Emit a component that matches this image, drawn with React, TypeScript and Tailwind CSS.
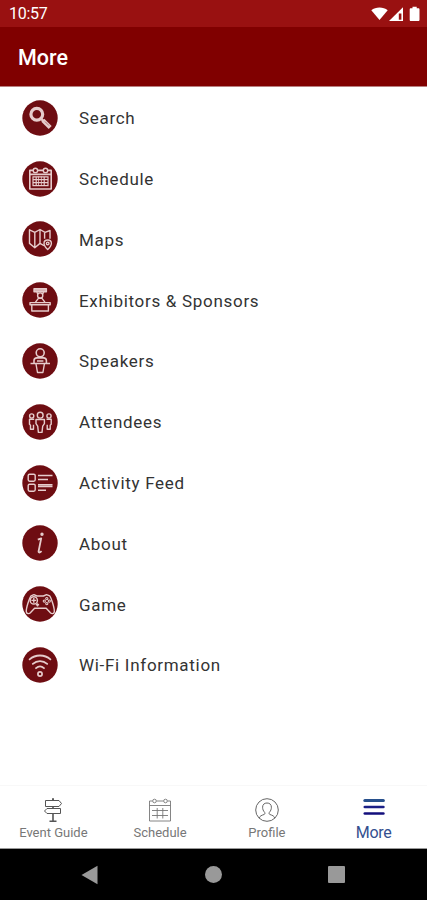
import React from 'react';

interface MenuItem {
  label: string;
  icon: React.ReactNode;
}

// All menu glyphs share a 36x36 box, drawn over a round badge
const Badge: React.FC<{ children: React.ReactNode }> = ({ children }) => (
  <svg viewBox="0 0 36 36" className="h-9 w-9 shrink-0" fill="none" stroke="#e6cccc" strokeWidth="1.4" strokeLinejoin="round">
    <circle cx="18" cy="18" r="17.7" fill="#6e0d12" stroke="none" />
    {children}
  </svg>
);

const menuItems: MenuItem[] = [
  {
    label: 'Search',
    icon: (
      <>
        <circle cx="14.8" cy="14.2" r="5.9" strokeWidth="3.2" />
        <path d="M18.8 18.4l3 3" strokeWidth="2.6" />
        <path d="M20.8 20.2l7.400 7.200" strokeWidth="4.2" />
        <path d="M23 21.6l4 4" stroke="#a65c5f" strokeWidth="0.8" />
      </>
    ),
  },
  {
    label: 'Schedule',
    icon: (
      <>
        <path d="M11 9.4H7.800v18.600h21.400v-18.600H26M16 9.4h5M8.5 13.4h20" strokeWidth="1.6" />
        <circle cx="13.4" cy="9.4" r="2.2" />
        <circle cx="23.5" cy="9.4" r="2.2" />
        <path d="M10.500 15.8h16M10.500 18.6h16M10.500 21.6h16M10.500 24.7h16M11 15.5v9.5M14.2 15.5v9.5M22.2 15.5v9.5M26 15.5v9.5" strokeWidth="1.2" />
        <path d="M16.5 15.5v9.5M19.4 15.5v9.5" strokeWidth="0.8" />
      </>
    ),
  },
  {
    label: 'Maps',
    icon: (
      <>
        <path d="M22 24.6l-4-2.2-5.2 4.4-5.3-4.4V8.800l5.3 2.500L18 8.500l5 2.800 5-1.800v8.3M12.8 11.3v15.5M18 8.7v13.7M22.6 11.3v6.5" />
        <path d="M25.7 19c-2.2 0-3.7 1.5-3.7 3.4 0 2.2 3.7 6.2 3.7 6.2s3.7-4 3.7-6.2c0-1.9-1.5-3.4-3.7-3.4z" />
        <circle cx="25.7" cy="22.4" r="1.3" />
      </>
    ),
  },
  {
    label: 'Exhibitors & Sponsors',
    icon: (
      <>
        <path d="M12 6.800h12.4v3H12z" fill="#d8b5b6" />
        <path d="M14.8 10.2l1.200 2M21.700 10.2l-1.200 2" />
        <circle cx="18.2" cy="13.5" r="2.6" />
        <path d="M13.500 20.200l2.900-3.900h3.600l2.900 3.900" />
        <path d="M8 20.6h20.2v2.2H8zM9.8 23v6h16.6V23" />
      </>
    ),
  },
  {
    label: 'Speakers',
    icon: (
      <>
        <circle cx="18.2" cy="9.8" r="4" strokeWidth="1.6" />
        <path d="M12 20v-2.4c0-1.8 1.2-2.7 3-2.7h6.4c1.8 0 3 .9 3 2.7V20M8.5 20.5h19.500" strokeWidth="1.6" />
        <path d="M14 21l1.5 8.500h5.4l1.5-8.500M15 18h6.400" />
      </>
    ),
  },
  {
    label: 'Attendees',
    icon: (
      <>
        <circle cx="18.2" cy="11.2" r="2.9" />
        <circle cx="9.7" cy="12" r="2.1" />
        <circle cx="27" cy="12" r="2.1" />
        <path d="M14 15.5h8.4v4.2l-1.7 2.4-.7 6.3h-3.6l-.7-6.3-1.7-2.4z" />
        <path d="M12.2 15.3H7.5v5l1 .9v4h3v-4.4M24.5 15.3h4.7v5l-1 .9v4h-3v-4.4" />
      </>
    ),
  },
  {
    label: 'Activity Feed',
    icon: (
      <>
        <rect x="6.2" y="9.200" width="7" height="7" rx="1.4" />
        <rect x="6.2" y="19.2" width="7" height="7" rx="1.4" />
        <path d="M16 10.500h14.5M16 14.500h10M16 19.800h14.5M16 21.500h14.5M16 25.3h8" />
      </>
    ),
  },
  {
    label: 'About',
    icon: (
      <>
        <circle cx="20" cy="9.3" r="1" fill="#e6cccc" />
        <path d="M15.800 14.6l3.400-1.2-2.6 12.8c-.3 1.7 1.100 1.700 3 0" strokeWidth="1.8" />
      </>
    ),
  },
  {
    label: 'Game',
    icon: (
      <>
        <path d="M9 9.800l2.9-1.200 3 1.4h6.6l3-1.4 3.2 1.3c1.5 2 5 12.5 4.6 15.900-.3 2.3-2.8 2.3-4.100.8l-4-4.3H12.6l-4 4.3c-1.3 1.5-4 1.500-4.300-.8-.4-3.400 3.200-14 4.700-16z" />
        <circle cx="11.8" cy="14.4" r="3.6" />
        <path d="M11.8 12v4.8M9.4 14.4h4.8M15.500 17.2v3.2M13.900 18.8h3.2" />
        <g strokeWidth="1.1">
          <circle cx="24.8" cy="12.6" r="1.1" />
          <circle cx="24.8" cy="17.6" r="1.1" />
          <circle cx="22.3" cy="15.1" r="1.1" />
          <circle cx="27.3" cy="15.1" r="1.1" />
        </g>
      </>
    ),
  },
  {
    label: 'Wi-Fi Information',
    icon: (
      <g strokeWidth="1.8" strokeLinecap="round">
        <path d="M7.6 12.4c5.8-5.2 15-5.2 20.8 0M10.8 16.900c4.2-3.8 10.2-3.8 14.4 0M14 21.2c2.4-2.2 5.6-2.2 8 0" />
        <circle cx="18" cy="27" r="2.1" strokeWidth="1.7" />
      </g>
    ),
  },
];

const SignpostIcon = () => (
  <svg viewBox="0 0 24 24" className="h-6 w-6" fill="none" stroke="#555" strokeWidth="1">
    <path d="M4.5 2.5H18l2.5 3-2.5 3H4.5zM19.5 10.500H6l-2.5 2.5L6 15.500h13.5z" />
    <path d="M11 1h2M12 .8v1.700M12 8.5v2M12 15.500v7.500M8.5 23.2h7" strokeWidth="1.6" />
  </svg>
);

const CalendarIcon = () => (
  <svg viewBox="0 0 24 24" className="h-6 w-6" fill="none" stroke="#777" strokeWidth="0.9">
    <path d="M4.5 3H1.5v20h21V3h-3M8.5 3h7M1.5 7.5h21" />
    <circle cx="6.5" cy="3" r="1.8" />
    <circle cx="17.5" cy="3" r="1.8" />
    <path d="M4 12.5h16M4 17.5h16M9.2 10v10.5M14.8 10v10.5" />
  </svg>
);

const ProfileIcon = () => (
  <svg viewBox="0 0 24 24" className="h-6 w-6" fill="none" stroke="#666" strokeWidth="1">
    <circle cx="12" cy="12" r="11.3" />
    <path d="M4.3 20.2c.4-2.2 2-2.7 5-3.8.8-.3.8-1.6.2-2.2-1.2-1.3-1.9-3-1.9-5C7.6 6.5 9.4 5 12 5s4.4 1.5 4.4 4.2c0 2-.7 3.7-1.9 5-.6.6-.6 1.9.2 2.2 3 1.1 4.600 1.6 5 3.8" />
  </svg>
);

const MenuIcon = () => (
  <svg viewBox="0 0 24 24" className="h-6 w-6" fill="none" strokeWidth="3" strokeLinecap="round">
    <path d="M2.8 2.500h18.600" stroke="#27508c" />
    <path d="M2.8 9h18.600" stroke="#1b1f86" strokeWidth="2.6" />
    <path d="M2.8 15.500h18.600" stroke="#130f7c" strokeWidth="2.6" />
  </svg>
);

const tabs = [
  { label: 'Event Guide', icon: <SignpostIcon /> },
  { label: 'Schedule', icon: <CalendarIcon /> },
  { label: 'Profile', icon: <ProfileIcon /> },
  { label: 'More', icon: <MenuIcon />, active: true },
];

const StatusBar = () => (
  <div className="flex h-[27px] shrink-0 items-center justify-between bg-[#991111] pr-[7px] pl-[9px] text-white">
    <span className="pt-px text-[16px] leading-none tracking-[-0.3px]">10:57</span>
    <svg viewBox="0 0 50 16" className="h-4 w-[50px]" fill="white">
      <path d="M1.3 4.3C5.5.5 13.5.5 17.7 4.3L9.5 14z" />
      <path d="M19 15L33 1.2V15z" />
      <path d="M28.8 7.5h2.6v6.2h-2.6z" fill="#991111" />
      <path d="M42.5.8h4.2v1.5h1.6c.8 0 1.2.4 1.2 1.2v10.3c0 .8-.4 1.2-1.2 1.2h-7.4c-.8 0-1.2-.4-1.2-1.2V3.5c0-.8.4-1.2 1.2-1.2h1.6z" />
    </svg>
  </div>
);

const App: React.FC = () => {
  return (
    <div className="flex h-[900px] w-[427px] flex-col overflow-hidden bg-white font-[Roboto,sans-serif]">
      <StatusBar />

      <header className="flex h-[60px] shrink-0 items-center border-b border-[#b98080] bg-[#800000] pt-[4px] pl-[18px]">
        <h1 className="text-[21.5px] font-medium text-white">More</h1>
      </header>

      <ul className="flex-1 pt-[0.5px]">
        {menuItems.map(item => (
          <li key={item.label} className="flex h-[60.8px] items-center pl-[21.5px]">
            <Badge>{item.icon}</Badge>
            <span className="pt-[2px] pl-[21.5px] text-[17px] tracking-[0.7px] text-[#333]">{item.label}</span>
          </li>
        ))}
      </ul>

      {/* Bottom tabs */}
      <nav className="grid h-[64px] shrink-0 grid-cols-4 border-t border-[#f8f8f8] border-b border-b-[#999]">
        {tabs.map(tab => (
          <div key={tab.label} className="flex flex-col items-center pt-[12px]">
            {tab.icon}
            {tab.active ? (
              <span className="mt-[2px] text-[16px] leading-[18px] tracking-[-0.3px] text-[#34508f]">{tab.label}</span>
            ) : (
              <span className="mt-[3px] text-[13px] leading-4 text-[#777]">{tab.label}</span>
            )}
          </div>
        ))}
      </nav>

      {/* Android navigation keys */}
      <div className="flex h-[51px] shrink-0 items-center justify-between bg-black pr-[82px] pl-[81px]">
        <svg viewBox="0 0 18 20" className="h-5 w-[18px]" fill="#999">
          <path d="M.5 10L16.500.8v18.4z" />
        </svg>
        <div className="h-[17px] w-[17px] rounded-full bg-[#999]" />
        <div className="h-[17px] w-[17px] rounded-[1px] bg-[#999]" />
      </div>
    </div>
  );
};

export default App;
